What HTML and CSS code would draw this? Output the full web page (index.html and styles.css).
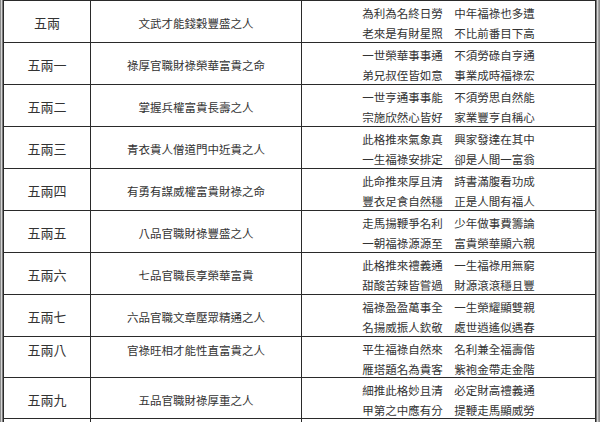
FILE: index.html
```html
<!DOCTYPE html>
<html lang="zh-Hant">
<head>
<meta charset="utf-8">
<title>稱骨歌</title>
<link rel="stylesheet" href="styles.css">
</head>
<body>
<div class="frame">
  <div class="edge-l"></div>
  <div class="table">
    <div class="row">
      <div class="cell name">五兩</div>
      <div class="cell desc">文武才能錢穀豐盛之人</div>
      <div class="cell verse"><span>為利為名終日勞　中年福祿也多遭</span><span>老來是有財星照　不比前番目下高</span></div>
    </div>
    <div class="row">
      <div class="cell name">五兩一</div>
      <div class="cell desc">祿厚官職財祿榮華富貴之命</div>
      <div class="cell verse"><span>一世榮華事事通　不須勞碌自亨通</span><span>弟兄叔侄皆如意　事業成時福祿宏</span></div>
    </div>
    <div class="row">
      <div class="cell name">五兩二</div>
      <div class="cell desc">掌握兵權富貴長壽之人</div>
      <div class="cell verse"><span>一世亨通事事能　不須勞思自然能</span><span>宗施欣然心皆好　家業豐亨自稱心</span></div>
    </div>
    <div class="row">
      <div class="cell name">五兩三</div>
      <div class="cell desc">青衣貴人僧道門中近貴之人</div>
      <div class="cell verse"><span>此格推來氣象真　興家發達在其中</span><span>一生福祿安排定　卻是人間一富翁</span></div>
    </div>
    <div class="row">
      <div class="cell name">五兩四</div>
      <div class="cell desc">有勇有謀威權富貴財祿之命</div>
      <div class="cell verse"><span>此命推來厚且清　詩書滿腹看功成</span><span>豐衣足食自然穩　正是人間有福人</span></div>
    </div>
    <div class="row">
      <div class="cell name">五兩五</div>
      <div class="cell desc">八品官職財祿豐盛之人</div>
      <div class="cell verse"><span>走馬揚鞭爭名利　少年做事費籌論</span><span>一朝福祿源源至　富貴榮華顯六親</span></div>
    </div>
    <div class="row">
      <div class="cell name">五兩六</div>
      <div class="cell desc">七品官職長享榮華富貴</div>
      <div class="cell verse"><span>此格推來禮義通　一生福祿用無窮</span><span>甜酸苦辣皆嘗過　財源滾滾穩且豐</span></div>
    </div>
    <div class="row">
      <div class="cell name">五兩七</div>
      <div class="cell desc">六品官職文章壓眾精通之人</div>
      <div class="cell verse"><span>福祿盈盈萬事全　一生榮耀顯雙親</span><span>名揚威振人欽敬　處世逍遙似遇春</span></div>
    </div>
    <div class="row short top">
      <div class="cell name">五兩八</div>
      <div class="cell desc">官祿旺相才能性直富貴之人</div>
      <div class="cell verse"><span>平生福祿自然來　名利兼全福壽偕</span><span>雁塔題名為貴客　紫袍金帶走金階</span></div>
    </div>
    <div class="row short">
      <div class="cell name">五兩九</div>
      <div class="cell desc">五品官職財祿厚重之人</div>
      <div class="cell verse"><span>細推此格妙且清　必定財高禮義通</span><span>甲第之中應有分　提鞭走馬顯威勞</span></div>
    </div>
    <div class="row">
      <div class="cell name"></div>
      <div class="cell desc"></div>
      <div class="cell verse"></div>
    </div>
  </div>
  <div class="edge-r"></div>
</div>
</body>
</html>
```

FILE: styles.css
```css
html, body {
  margin: 0;
  padding: 0;
  overflow: hidden;
  background: #ffffff;
}

.frame {
  display: flex;
  height: 422px;
  overflow: hidden;
  font-family: "Noto Sans CJK TC", "Noto Sans CJK SC", sans-serif;
  color: #333333;
}

.edge-l {
  width: 3px;
  flex: none;
  background: linear-gradient(to right, #8c8c8c 0 1px, #d6d6d6 1px 2px, #7c7c7c 2px 3px);
}

.edge-r {
  width: 4px;
  flex: none;
  background: linear-gradient(to right, #7c7c7c 0 1px, #d6d6d6 1px 2px, #a4a4a4 2px 3px, #8c8c8c 3px 4px);
}

.table {
  width: 593px;
  flex: none;
}

.row {
  display: grid;
  grid-template-columns: 87px 211px 295px;
  height: 42px;
  box-sizing: border-box;
  border-top: 1px solid #2a2a2a;
}

.row.short {
  height: 41px;
}

.cell {
  border-left: 1px solid #2a2a2a;
  display: flex;
  align-items: center;
  justify-content: center;
  white-space: nowrap;
  box-sizing: border-box;
}

.name {
  font-size: 13px;
  line-height: 20px;
  padding-top: 1px;
}

.desc {
  font-size: 11.5px;
  line-height: 20px;
  padding-top: 1px;
}

.verse {
  border-right: 1px solid #2a2a2a;
  flex-direction: column;
  justify-content: flex-start;
  font-size: 11.5px;
  line-height: 20px;
  padding-top: 2px;
}

.row.top .name,
.row.top .desc {
  align-items: flex-start;
  padding-top: 3px;
}
```
